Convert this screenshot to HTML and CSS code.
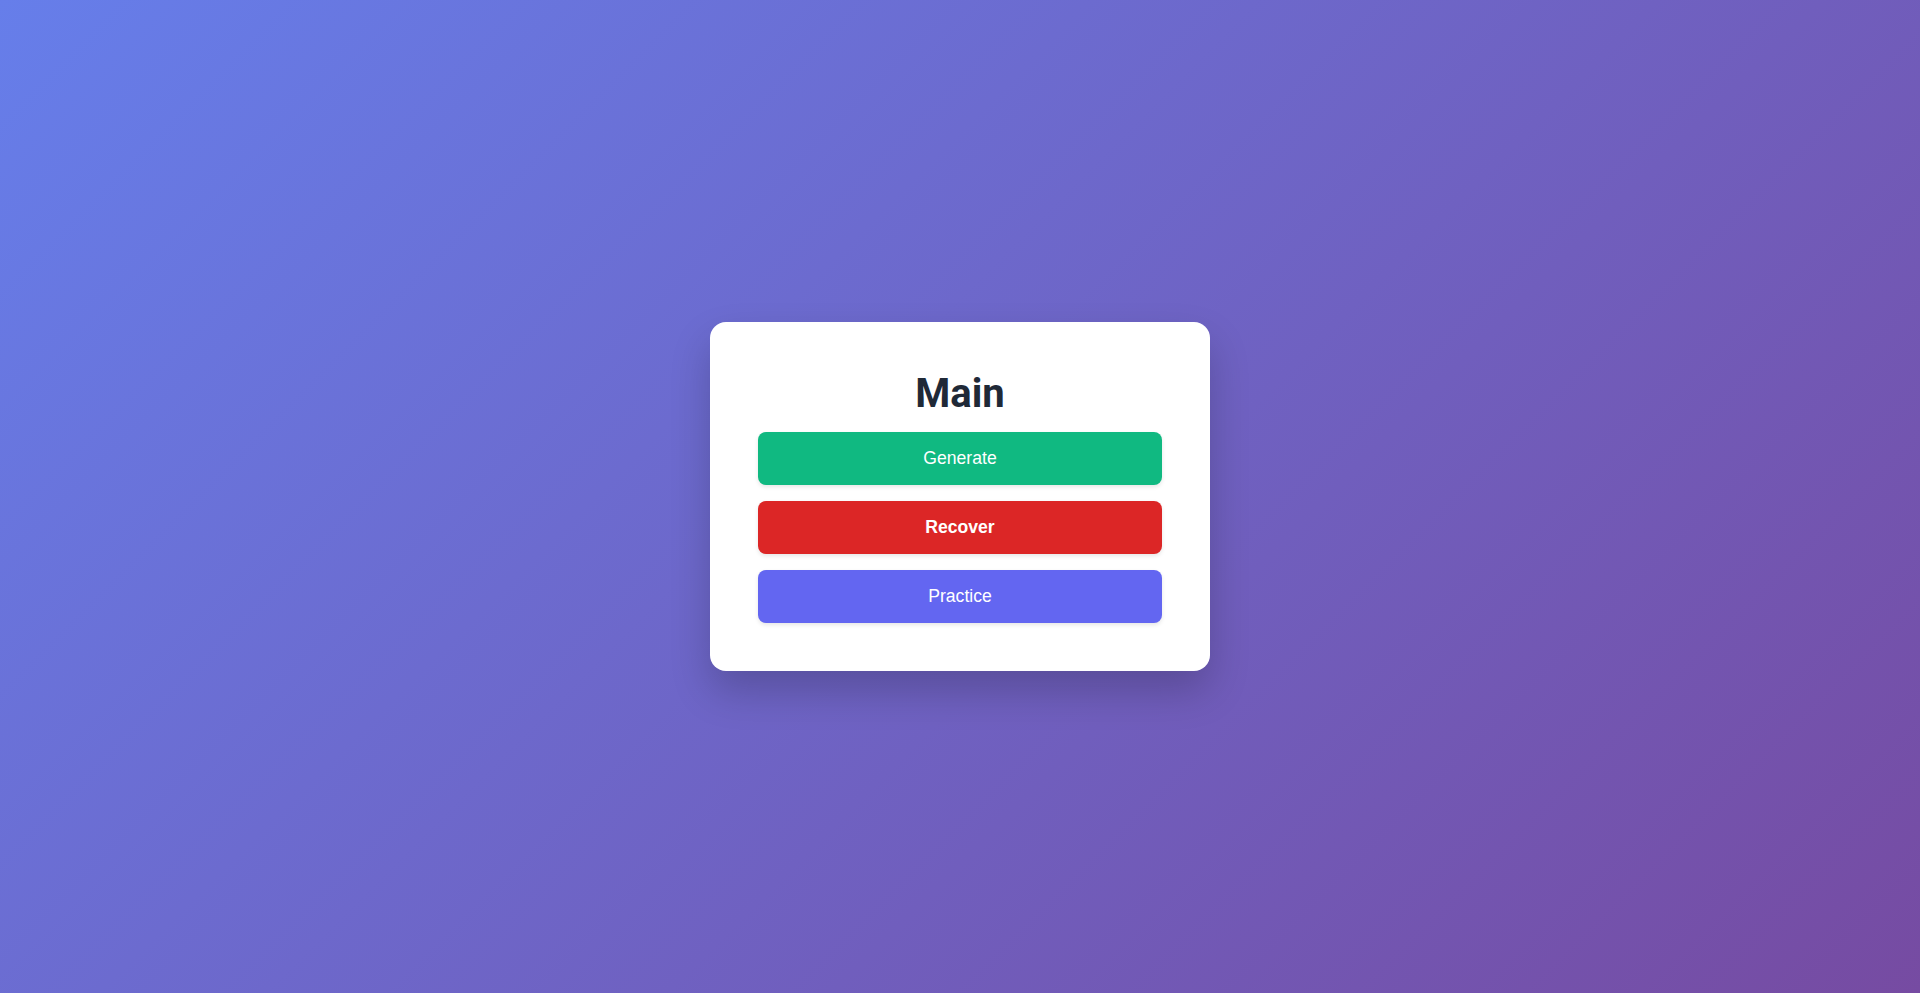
FILE: index.html
```html
<!DOCTYPE html>
<html lang="en">
<head>
<meta charset="utf-8">
<title>Main</title>
<link rel="stylesheet" href="styles.css">
</head>
<body>
<main class="page">
  <section class="card">
    <h1 class="title">Main</h1>
    <div class="actions">
      <button class="btn btn-green">Generate</button>
      <button class="btn btn-red">Recover</button>
      <button class="btn btn-indigo">Practice</button>
    </div>
  </section>
</main>
</body>
</html>
```
FILE: styles.css
```css
* { box-sizing: border-box; }
html, body { margin: 0; height: 100%; }
body {
  background: linear-gradient(135deg, #667eea 0%, #764ba2 100%);
  font-family: "Liberation Sans", Arial, sans-serif;
}
.page {
  min-height: 100vh;
  display: flex;
  align-items: center;
  justify-content: center;
}
.card {
  width: 500px;
  background: #fff;
  border-radius: 16px;
  padding: 48px;
  box-shadow: 0 20px 40px rgba(0, 0, 0, 0.2);
}
.title {
  margin: 0 0 14px;
  text-align: center;
  font-family: Roboto, "Liberation Sans", sans-serif;
  font-weight: 700;
  font-size: 40px;
  line-height: 48px;
  color: #1f2937;
}
.actions {
  display: flex;
  flex-direction: column;
  gap: 16px;
}
.btn {
  display: block;
  width: 100%;
  border: none;
  border-radius: 8px;
  padding: 16px;
  font-family: "Liberation Sans", Arial, sans-serif;
  font-size: 17.6px;
  line-height: 21px;
  color: #fff;
  box-shadow: 0 2px 4px rgba(0, 0, 0, 0.1);
  cursor: pointer;
}
.btn-green { background: #10b981; }
.btn-red { background: #dc2626; font-weight: 700; }
.btn-indigo { background: #6366f1; }
```
